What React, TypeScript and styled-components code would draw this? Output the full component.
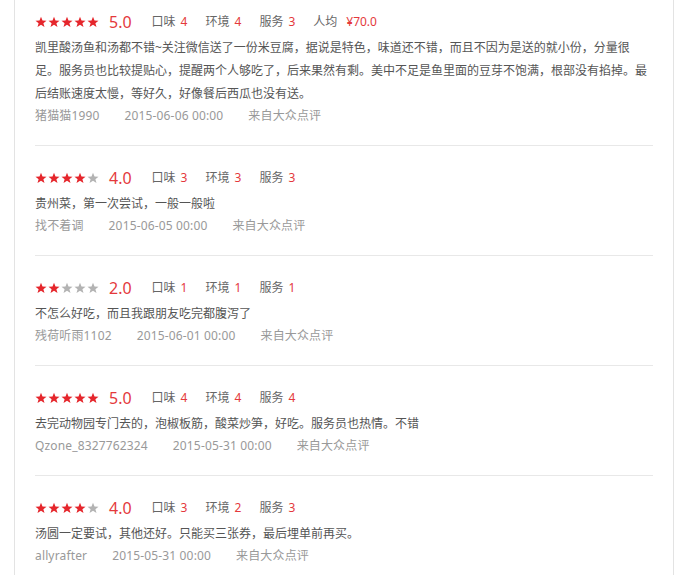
import React from "react";
import styled, { createGlobalStyle } from "styled-components";

const GlobalStyle = createGlobalStyle`
* {
  box-sizing: border-box;
}
body {
  margin: 0;
  padding: 0;
  background: #fff;
  font-family: "Noto Sans", "Noto Sans CJK SC", sans-serif;
  font-size: 12px;
  color: #666;
}
`;

const Panel = styled.div`
  margin-left: 14px;
  width: 660px;
  min-height: 100vh;
  border-left: 1px solid #e3e3e3;
  border-right: 1px solid #e3e3e3;
  padding: 0 20px;
`;

const ReviewItem = styled.div`
  padding: 20px 0 19px;
  border-top: 1px solid #e8e8e8;

  &:first-child {
    padding-top: 10px;
    border-top: 0;
  }
`;

const HeaderRow = styled.div`
  display: flex;
  align-items: center;
  height: 24px;
`;

const Stars = styled.div`
  display: flex;
  gap: 1px;
  margin-right: 10px;
`;

const Score = styled.span`
  font-size: 16px;
  color: #e4393c;
  margin-right: 20px;
  line-height: 24px;
`;

const Sub = styled.span`
  color: #666;
  margin-right: 18px;
  line-height: 24px;
  white-space: nowrap;
`;

const SubValue = styled.span<{ $wide?: boolean }>`
  color: #e4393c;
  margin-left: ${({ $wide }) => ($wide ? "9px" : "5px")};
`;

const Body = styled.p`
  margin: 2px 0 0;
  line-height: 23px;
  color: #555;
`;

const Meta = styled.div`
  display: flex;
  line-height: 21px;
  color: #999;
`;

const MetaItem = styled.span`
  margin-right: 25px;
  letter-spacing: 0.15px;
`;

const Star = ({ on }: { on: boolean }) => (
  <svg width="12" height="12" viewBox="0 0 24 24">
    <polygon
      points="12,1.5 15,9 23,9.3 16.8,14.3 19,22.2 12,17.6 5,22.2 7.2,14.3 1,9.3 9,9"
      fill={on ? "#e5262c" : "#b3b3b3"}
    />
  </svg>
);

interface IReview {
  stars: number;
  taste: number;
  env: number;
  service: number;
  avg?: string;
  text: string;
  user: string;
  date: string;
}

const reviews: IReview[] = [
  {
    stars: 5,
    taste: 4,
    env: 4,
    service: 3,
    avg: "¥70.0",
    text: "凯里酸汤鱼和汤都不错~关注微信送了一份米豆腐，据说是特色，味道还不错，而且不因为是送的就小份，分量很足。服务员也比较提贴心，提醒两个人够吃了，后来果然有剩。美中不足是鱼里面的豆芽不饱满，根部没有掐掉。最后结账速度太慢，等好久，好像餐后西瓜也没有送。",
    user: "猪猫猫1990",
    date: "2015-06-06 00:00",
  },
  {
    stars: 4,
    taste: 3,
    env: 3,
    service: 3,
    text: "贵州菜，第一次尝试，一般一般啦",
    user: "找不着调",
    date: "2015-06-05 00:00",
  },
  {
    stars: 2,
    taste: 1,
    env: 1,
    service: 1,
    text: "不怎么好吃，而且我跟朋友吃完都腹泻了",
    user: "残荷听雨1102",
    date: "2015-06-01 00:00",
  },
  {
    stars: 5,
    taste: 4,
    env: 4,
    service: 4,
    text: "去完动物园专门去的，泡椒板筋，酸菜炒笋，好吃。服务员也热情。不错",
    user: "Qzone_8327762324",
    date: "2015-05-31 00:00",
  },
  {
    stars: 4,
    taste: 3,
    env: 2,
    service: 3,
    text: "汤圆一定要试，其他还好。只能买三张券，最后埋单前再买。",
    user: "allyrafter",
    date: "2015-05-31 00:00",
  },
];

export default function App() {
  return (
    <>
      <GlobalStyle />
      <Panel>
        {reviews.map((r, i) => (
          <ReviewItem key={i}>
            <HeaderRow>
              <Stars>
                {[0, 1, 2, 3, 4].map((n) => (
                  <Star key={n} on={n < r.stars} />
                ))}
              </Stars>
              <Score>{r.stars.toFixed(1)}</Score>
              <Sub>
                口味<SubValue>{r.taste}</SubValue>
              </Sub>
              <Sub>
                环境<SubValue>{r.env}</SubValue>
              </Sub>
              <Sub>
                服务<SubValue>{r.service}</SubValue>
              </Sub>
              {r.avg && (
                <Sub>
                  人均<SubValue $wide>{r.avg}</SubValue>
                </Sub>
              )}
            </HeaderRow>
            <Body>{r.text}</Body>
            <Meta>
              <MetaItem>{r.user}</MetaItem>
              <MetaItem>{r.date}</MetaItem>
              <MetaItem>来自大众点评</MetaItem>
            </Meta>
          </ReviewItem>
        ))}
      </Panel>
    </>
  );
}
